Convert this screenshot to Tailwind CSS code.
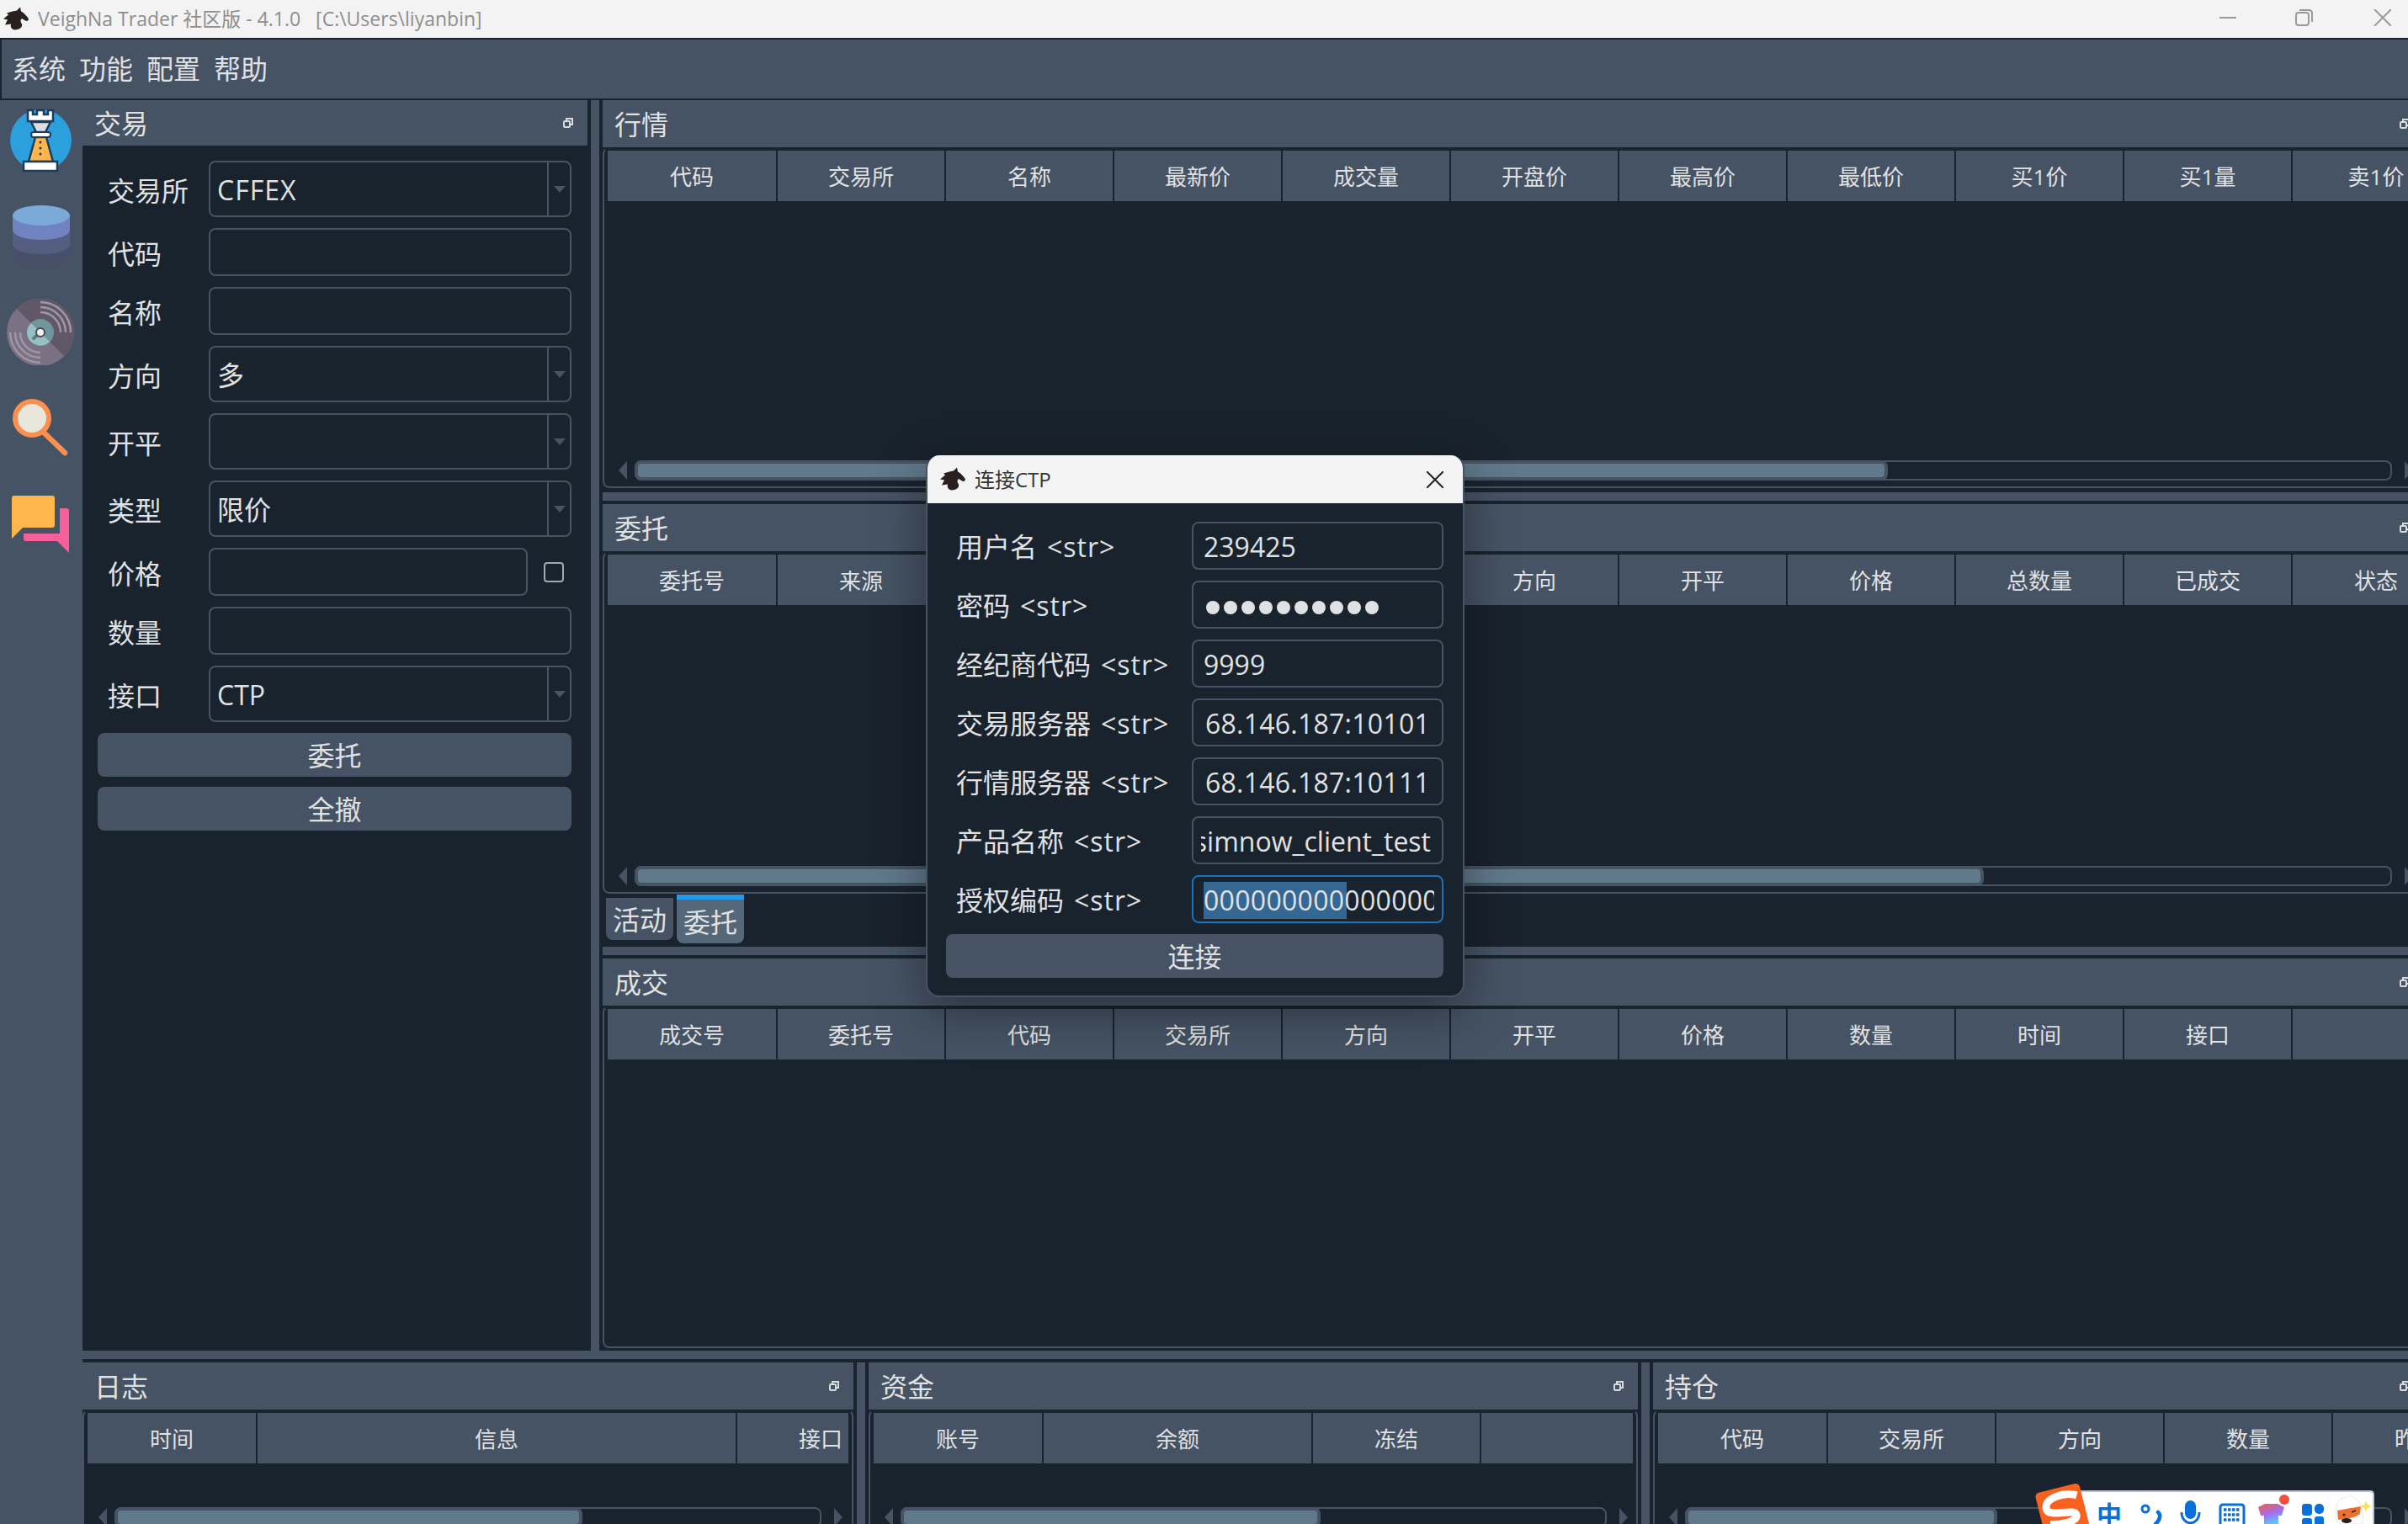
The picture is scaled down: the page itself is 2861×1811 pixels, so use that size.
<!DOCTYPE html>
<html lang="zh-CN">
<head>
    <meta charset="UTF-8">
    <title>VeighNa Trader</title>
    <script src="https://cdn.jsdelivr.net/npm/@tailwindcss/browser@4"></script>
</head>
<body class="bg-[#19232d]">
<div class="relative w-[2861px] h-[1811px] overflow-hidden flex flex-col bg-[#19232d] text-[#e0e1e3] text-[32px] [font-family:'Open_Sans','Noto_Sans_CJK_SC',sans-serif]">

    <!-- title bar -->
    <div class="h-[47px] shrink-0 bg-[#f3f3f3] border-b-2 border-[#19232d] flex items-center pl-[3px] relative">
        <svg class="w-[32px] h-[29px]" viewBox="0 0 32 28"><path fill="#2a1f1f" d="M12 5L17 4L21 0L22 5C26 7 29 11 31 14C31 16 29 17 27 16L23 13.5C21 15 21 18 23 20C24 24 20 27 14 27C11 26 9 24 10 20L3 21L6 15L1 14L7 9L5 7Z"/></svg>
        <span class="ml-[10px] text-[23px] leading-none text-[#8e8e8e] whitespace-pre">VeighNa Trader 社区版 - 4.1.0   [C:\Users\liyanbin]</span>
        <svg class="absolute left-[2637px] top-[11px] w-[204px] h-[20px]" viewBox="0 0 204 20" fill="none" stroke="#9a9a9a" stroke-width="2"><path d="M0 10H20"/><rect x="91" y="4" width="15" height="15" rx="3"/><path d="M95 1H106Q110 1 110 5V15"/><path d="M184 0L204 20M204 0L184 20"/></svg>
    </div>

    <!-- menu -->
    <div class="h-[72px] shrink-0 bg-[#455364] border-b-2 border-l-2 border-[#19232d] flex items-center pl-[12px] gap-[16px]">
        <span>系统</span><span>功能</span><span>配置</span><span>帮助</span>
    </div>

    <div class="flex flex-1 min-h-0">
        <!-- tool bar -->
        <div class="w-[98px] shrink-0 bg-[#455364] flex flex-col pt-[7px] gap-[34px]">
            <svg class="w-[98px] h-[80px]" viewBox="0 0 98 80">
                <circle cx="48.5" cy="40.5" r="36.5" fill="#2ba0dc"/>
                <path d="M42 37L34 66H63L55 37Z" fill="#ffb64d" stroke="#1c3c5c" stroke-width="2.5"/>
                <path d="M37 19H60L54 31H43Z" fill="#dcdfe2" stroke="#1c3c5c" stroke-width="2.5"/>
                <path d="M33 5H39V10H44V5H52V10H57V5H63V18H33Z" fill="#fff" stroke="#1c3c5c" stroke-width="2.5"/>
                <rect x="37" y="31" width="23" height="6" rx="3" fill="#fff" stroke="#1c3c5c" stroke-width="2"/>
                <rect x="28" y="66" width="40" height="11" fill="#fff" stroke="#1c3c5c" stroke-width="2.5"/>
                <circle cx="48" cy="43" r="1.5" fill="#1c3c5c"/><circle cx="48" cy="50" r="1.5" fill="#1c3c5c"/><circle cx="48" cy="57" r="1.5" fill="#1c3c5c"/>
            </svg>
            <svg class="w-[98px] h-[80px]" viewBox="0 0 98 80">
                <path d="M15 40V65C15 72 30 77 49 77S83 72 83 65V40Z" fill="#474f69"/>
                <path d="M15 30V50C15 57 30 62 49 62S83 57 83 50V30Z" fill="#545e80"/>
                <path d="M15 16V33C15 40 30 45 49 45S83 40 83 33V16Z" fill="#7082c0"/>
                <ellipse cx="49" cy="16" rx="34" ry="12" fill="#7baad9"/>
            </svg>
            <svg class="w-[98px] h-[80px]" viewBox="0 0 98 80">
                <circle cx="48" cy="41" r="40" fill="#7b7084"/>
                <path d="M48 41V1A40 40 0 0 0 20 13Z" fill="#625766"/>
                <path d="M48 41L76 69A40 40 0 0 0 88 41Z" fill="#625766"/>
                <path d="M48 41V1A40 40 0 0 1 88 41Z" fill="#625766"/>
                <g fill="none" stroke="#a096a6" stroke-width="2.5">
                    <path d="M48 5A36 36 0 0 1 84 41"/><path d="M48 11A30 30 0 0 1 78 41"/><path d="M48 17A24 24 0 0 1 72 41"/>
                    <path d="M12 41A36 36 0 0 0 48 77"/><path d="M18 41A30 30 0 0 0 48 71"/><path d="M24 41A24 24 0 0 0 48 65"/>
                </g>
                <circle cx="48" cy="41" r="16" fill="#6f969c"/>
                <path d="M48 41L37 30A16 16 0 0 0 32 41Z" fill="#96bfc6"/>
                <path d="M48 41L59 52A16 16 0 0 1 32 41Z" fill="#96bfc6"/>
                <path d="M48 41L40 48" stroke="#5d7c80" stroke-width="4" stroke-linecap="round"/>
                <circle cx="48" cy="41" r="5" fill="#f1eff3" stroke="#4c4552" stroke-width="2"/>
            </svg>
            <svg class="w-[98px] h-[80px]" viewBox="0 0 98 80">
                <path d="M52 46L77 70" stroke="#fa8f4e" stroke-width="6.5" stroke-linecap="round"/>
                <circle cx="38" cy="29" r="20" fill="#e9e6dc" stroke="#fa8f4e" stroke-width="6"/>
            </svg>
            <svg class="w-[98px] h-[80px]" viewBox="0 -1 98 80">
                <path d="M71 21H79Q82 21 82 24V74L68 60H31Q28 60 28 57V51H71Z" fill="#f4619a"/>
                <path d="M17 6H62Q65 6 65 9V41Q65 44 62 44H27L14 57V9Q14 6 17 6Z" fill="#ffb64d"/>
            </svg>
        </div>

        <div class="flex-1 min-w-0 flex flex-col">
            <div class="h-[1486px] shrink-0 flex">
                <!-- trading dock -->
                <div class="w-[600px] shrink-0 flex flex-col">
                    <div class="h-[54px] shrink-0 bg-[#455364] flex items-center justify-between pl-[14px] pr-[17px]">
                        <span class="pt-[2px]">交易</span>
                        <svg class="w-[12px] h-[12px]" viewBox="0 0 12 12" fill="none" stroke="#d8dadd" stroke-width="2"><rect x="1" y="4" width="7" height="7" rx="1"/><path d="M4 4V1H11V8H8"/></svg>
                    </div>
                    <div class="flex-1 flex flex-col pt-[18px] pl-[18px] pr-[19px]">
                        <div class="flex flex-col gap-[13px]">
                            <div class="h-[67px] flex items-center">
                                <span class="w-[132px] pl-[12px] pt-[5px]">交易所</span>
                                <div class="flex-1 h-full border-2 border-[#455364] rounded-lg flex items-center pl-[8px]">
                                    <span class="flex-1 pt-[2px] tracking-[1px]">CFFEX</span>
                                    <div class="w-[27px] h-full border-l-2 border-[#455364] flex items-center justify-center"><div class="border-x-[7px] border-x-transparent border-t-[8px] border-t-[#455364]"></div></div>
                                </div>
                            </div>
                            <div class="h-[57px] flex items-center">
                                <span class="w-[132px] pl-[12px] pt-[5px]">代码</span>
                                <div class="flex-1 h-full border-2 border-[#455364] rounded-lg"></div>
                            </div>
                            <div class="h-[57px] flex items-center">
                                <span class="w-[132px] pl-[12px] pt-[5px]">名称</span>
                                <div class="flex-1 h-full border-2 border-[#455364] rounded-lg"></div>
                            </div>
                            <div class="h-[67px] flex items-center">
                                <span class="w-[132px] pl-[12px] pt-[5px]">方向</span>
                                <div class="flex-1 h-full border-2 border-[#455364] rounded-lg flex items-center pl-[8px]">
                                    <span class="flex-1 pt-[2px]">多</span>
                                    <div class="w-[27px] h-full border-l-2 border-[#455364] flex items-center justify-center"><div class="border-x-[7px] border-x-transparent border-t-[8px] border-t-[#455364]"></div></div>
                                </div>
                            </div>
                            <div class="h-[67px] flex items-center">
                                <span class="w-[132px] pl-[12px] pt-[5px]">开平</span>
                                <div class="flex-1 h-full border-2 border-[#455364] rounded-lg flex items-center pl-[8px]">
                                    <span class="flex-1"></span>
                                    <div class="w-[27px] h-full border-l-2 border-[#455364] flex items-center justify-center"><div class="border-x-[7px] border-x-transparent border-t-[8px] border-t-[#455364]"></div></div>
                                </div>
                            </div>
                            <div class="h-[67px] flex items-center">
                                <span class="w-[132px] pl-[12px] pt-[5px]">类型</span>
                                <div class="flex-1 h-full border-2 border-[#455364] rounded-lg flex items-center pl-[8px]">
                                    <span class="flex-1 pt-[2px]">限价</span>
                                    <div class="w-[27px] h-full border-l-2 border-[#455364] flex items-center justify-center"><div class="border-x-[7px] border-x-transparent border-t-[8px] border-t-[#455364]"></div></div>
                                </div>
                            </div>
                            <div class="h-[57px] flex items-center">
                                <span class="w-[132px] pl-[12px] pt-[5px]">价格</span>
                                <div class="w-[379px] h-full border-2 border-[#455364] rounded-lg"></div>
                                <div class="ml-[19px] w-[24px] h-[24px] border-2 border-[#9da9b5] rounded-[4px]"></div>
                            </div>
                            <div class="h-[57px] flex items-center">
                                <span class="w-[132px] pl-[12px] pt-[5px]">数量</span>
                                <div class="flex-1 h-full border-2 border-[#455364] rounded-lg"></div>
                            </div>
                            <div class="h-[67px] flex items-center">
                                <span class="w-[132px] pl-[12px] pt-[5px]">接口</span>
                                <div class="flex-1 h-full border-2 border-[#455364] rounded-lg flex items-center pl-[8px]">
                                    <span class="flex-1 pt-[2px]">CTP</span>
                                    <div class="w-[27px] h-full border-l-2 border-[#455364] flex items-center justify-center"><div class="border-x-[7px] border-x-transparent border-t-[8px] border-t-[#455364]"></div></div>
                                </div>
                            </div>
                        </div>
                        <div class="mt-[13px] h-[52px] pt-[2px] bg-[#455364] rounded-lg flex items-center justify-center">委托</div>
                        <div class="mt-[12px] h-[52px] pt-[2px] bg-[#455364] rounded-lg flex items-center justify-center">全撤</div>
                    </div>
                </div>
                <div class="w-[4px] shrink-0"></div>
                <div class="w-[10px] shrink-0 bg-[#455364]"></div>
                <div class="w-[4px] shrink-0"></div>

                <!-- right column -->
                <div class="w-[2145px] shrink-0 overflow-hidden flex flex-col items-start">
                    <!-- market -->
                    <div class="w-[2164px] shrink-0 h-[461px] flex flex-col">
                        <div class="h-[56px] shrink-0 bg-[#455364] flex items-center justify-between pl-[14px] pr-[17px]">
                            <span class="pt-[2px]">行情</span>
                            <svg class="w-[12px] h-[12px]" viewBox="0 0 12 12" fill="none" stroke="#d8dadd" stroke-width="2"><rect x="1" y="4" width="7" height="7" rx="1"/><path d="M4 4V1H11V8H8"/></svg>
                        </div>
                        <div class="flex-1 min-h-0 flex flex-col border-2 border-[#455364] border-t-[#19232d] rounded-lg pt-[2px]">
                            <div class="ml-[4px] h-[60px] shrink-0 bg-[#455364] flex overflow-hidden text-[26px] [&>div]:pt-[2px]">
                                <div class="w-[202px] shrink-0 border-r-2 border-[#19232d] flex items-center justify-center">代码</div>
                                <div class="w-[200px] shrink-0 border-r-2 border-[#19232d] flex items-center justify-center">交易所</div>
                                <div class="w-[200px] shrink-0 border-r-2 border-[#19232d] flex items-center justify-center">名称</div>
                                <div class="w-[200px] shrink-0 border-r-2 border-[#19232d] flex items-center justify-center">最新价</div>
                                <div class="w-[200px] shrink-0 border-r-2 border-[#19232d] flex items-center justify-center">成交量</div>
                                <div class="w-[200px] shrink-0 border-r-2 border-[#19232d] flex items-center justify-center">开盘价</div>
                                <div class="w-[200px] shrink-0 border-r-2 border-[#19232d] flex items-center justify-center">最高价</div>
                                <div class="w-[200px] shrink-0 border-r-2 border-[#19232d] flex items-center justify-center">最低价</div>
                                <div class="w-[200px] shrink-0 border-r-2 border-[#19232d] flex items-center justify-center">买1价</div>
                                <div class="w-[200px] shrink-0 border-r-2 border-[#19232d] flex items-center justify-center">买1量</div>
                                <div class="w-[200px] shrink-0 border-r-2 border-[#19232d] flex items-center justify-center">卖1价</div>
                            </div>
                            <div class="flex-1"></div>
                            <div class="h-[24px] shrink-0 mb-[7px] flex items-center pl-[17px] pr-[11px]">
                                <div class="border-y-[11px] border-y-transparent border-r-[10px] border-r-[#455364]"></div>
                                <div class="ml-[9px] flex-1 h-full border-2 border-[#455364] rounded-lg"><div class="w-[1489px] h-[24px] -m-[2px] bg-[#60798b] border-4 border-[#455364] rounded-lg"></div></div>
                                <div class="ml-[15px] border-y-[11px] border-y-transparent border-l-[10px] border-l-[#455364]"></div>
                            </div>
                        </div>
                    </div>
                    <div class="h-[5px] shrink-0"></div>
                    <div class="w-[2164px] h-[10px] shrink-0 bg-[#455364]"></div>
                    <div class="h-[4px] shrink-0"></div>

                    <!-- orders -->
                    <div class="w-[2164px] shrink-0 h-[463px] flex flex-col">
                        <div class="h-[56px] shrink-0 bg-[#455364] flex items-center justify-between pl-[14px] pr-[17px]">
                            <span class="pt-[2px]">委托</span>
                            <svg class="w-[12px] h-[12px]" viewBox="0 0 12 12" fill="none" stroke="#d8dadd" stroke-width="2"><rect x="1" y="4" width="7" height="7" rx="1"/><path d="M4 4V1H11V8H8"/></svg>
                        </div>
                        <div class="flex-1 min-h-0 flex flex-col border-2 border-[#455364] border-t-[#19232d] rounded-lg pt-[2px]">
                            <div class="ml-[4px] h-[60px] shrink-0 bg-[#455364] flex overflow-hidden text-[26px] [&>div]:pt-[2px]">
                                <div class="w-[202px] shrink-0 border-r-2 border-[#19232d] flex items-center justify-center">委托号</div>
                                <div class="w-[200px] shrink-0 border-r-2 border-[#19232d] flex items-center justify-center">来源</div>
                                <div class="w-[200px] shrink-0 border-r-2 border-[#19232d] flex items-center justify-center">代码</div>
                                <div class="w-[200px] shrink-0 border-r-2 border-[#19232d] flex items-center justify-center">交易所</div>
                                <div class="w-[200px] shrink-0 border-r-2 border-[#19232d] flex items-center justify-center">类型</div>
                                <div class="w-[200px] shrink-0 border-r-2 border-[#19232d] flex items-center justify-center">方向</div>
                                <div class="w-[200px] shrink-0 border-r-2 border-[#19232d] flex items-center justify-center">开平</div>
                                <div class="w-[200px] shrink-0 border-r-2 border-[#19232d] flex items-center justify-center">价格</div>
                                <div class="w-[200px] shrink-0 border-r-2 border-[#19232d] flex items-center justify-center">总数量</div>
                                <div class="w-[200px] shrink-0 border-r-2 border-[#19232d] flex items-center justify-center">已成交</div>
                                <div class="w-[200px] shrink-0 border-r-2 border-[#19232d] flex items-center justify-center">状态</div>
                            </div>
                            <div class="flex-1"></div>
                            <div class="h-[24px] shrink-0 mb-[7px] flex items-center pl-[17px] pr-[11px]">
                                <div class="border-y-[11px] border-y-transparent border-r-[10px] border-r-[#455364]"></div>
                                <div class="ml-[9px] flex-1 h-full border-2 border-[#455364] rounded-lg"><div class="w-[1603px] h-[24px] -m-[2px] bg-[#60798b] border-4 border-[#455364] rounded-lg"></div></div>
                                <div class="ml-[15px] border-y-[11px] border-y-transparent border-l-[10px] border-l-[#455364]"></div>
                            </div>
                        </div>
                    </div>
                    <!-- tabs -->
                    <div class="h-[63px] shrink-0 flex items-start pl-[4px] gap-[4px]">
                        <div class="mt-[5px] w-[80px] h-[50px] pt-[2px] bg-[#455364] rounded-b-lg flex items-center justify-center">活动</div>
                        <div class="mt-[1px] w-[80px] h-[58px] pt-[2px] bg-[#54687a] border-t-[6px] border-[#2599ea] rounded-b-lg flex items-center justify-center">委托</div>
                    </div>
                    <div class="w-[2164px] h-[10px] shrink-0 bg-[#455364]"></div>
                    <div class="h-[4px] shrink-0"></div>

                    <!-- trades -->
                    <div class="w-[2164px] shrink-0 h-[463px] flex flex-col">
                        <div class="h-[56px] shrink-0 bg-[#455364] flex items-center justify-between pl-[14px] pr-[17px]">
                            <span class="pt-[2px]">成交</span>
                            <svg class="w-[12px] h-[12px]" viewBox="0 0 12 12" fill="none" stroke="#d8dadd" stroke-width="2"><rect x="1" y="4" width="7" height="7" rx="1"/><path d="M4 4V1H11V8H8"/></svg>
                        </div>
                        <div class="flex-1 min-h-0 flex flex-col border-2 border-[#455364] border-t-[#19232d] rounded-lg pt-[2px]">
                            <div class="ml-[4px] h-[60px] shrink-0 bg-[#455364] flex overflow-hidden text-[26px] [&>div]:pt-[2px]">
                                <div class="w-[202px] shrink-0 border-r-2 border-[#19232d] flex items-center justify-center">成交号</div>
                                <div class="w-[200px] shrink-0 border-r-2 border-[#19232d] flex items-center justify-center">委托号</div>
                                <div class="w-[200px] shrink-0 border-r-2 border-[#19232d] flex items-center justify-center">代码</div>
                                <div class="w-[200px] shrink-0 border-r-2 border-[#19232d] flex items-center justify-center">交易所</div>
                                <div class="w-[200px] shrink-0 border-r-2 border-[#19232d] flex items-center justify-center">方向</div>
                                <div class="w-[200px] shrink-0 border-r-2 border-[#19232d] flex items-center justify-center">开平</div>
                                <div class="w-[200px] shrink-0 border-r-2 border-[#19232d] flex items-center justify-center">价格</div>
                                <div class="w-[200px] shrink-0 border-r-2 border-[#19232d] flex items-center justify-center">数量</div>
                                <div class="w-[200px] shrink-0 border-r-2 border-[#19232d] flex items-center justify-center">时间</div>
                                <div class="w-[200px] shrink-0 border-r-2 border-[#19232d] flex items-center justify-center">接口</div>
                            </div>
                        </div>
                    </div>
                </div>
            </div>

            <div class="h-[10px] shrink-0 bg-[#455364]"></div>
            <div class="h-[4px] shrink-0"></div>

            <!-- bottom docks -->
            <div class="flex-1 min-h-0 flex overflow-hidden">
                <div class="w-[916px] shrink-0 flex flex-col">
                    <div class="h-[56px] shrink-0 bg-[#455364] flex items-center justify-between pl-[14px] pr-[17px]">
                        <span class="pt-[2px]">日志</span>
                        <svg class="w-[12px] h-[12px]" viewBox="0 0 12 12" fill="none" stroke="#d8dadd" stroke-width="2"><rect x="1" y="4" width="7" height="7" rx="1"/><path d="M4 4V1H11V8H8"/></svg>
                    </div>
                    <div class="h-[149px] shrink-0 flex flex-col border-2 border-[#455364] border-t-[#19232d] rounded-lg pt-[2px]">
                        <div class="mx-[4px] h-[60px] shrink-0 bg-[#455364] flex overflow-hidden text-[26px] [&>div]:pt-[2px]">
                            <div class="w-[202px] shrink-0 border-r-2 border-[#19232d] flex items-center justify-center">时间</div>
                            <div class="w-[570px] shrink-0 border-r-2 border-[#19232d] flex items-center justify-center">信息</div>
                            <div class="w-[200px] shrink-0 border-r-2 border-[#19232d] flex items-center justify-center">接口</div>
                        </div>
                        <div class="flex-1"></div>
                        <div class="h-[24px] shrink-0 mb-[7px] flex items-center pl-[17px] pr-[11px]">
                            <div class="border-y-[11px] border-y-transparent border-r-[10px] border-r-[#455364]"></div>
                            <div class="ml-[9px] flex-1 h-full border-2 border-[#455364] rounded-lg"><div class="w-[556px] h-[24px] -m-[2px] bg-[#60798b] border-4 border-[#455364] rounded-lg"></div></div>
                            <div class="ml-[15px] border-y-[11px] border-y-transparent border-l-[10px] border-l-[#455364]"></div>
                        </div>
                    </div>
                </div>
                <div class="w-[4px] shrink-0"></div>
                <div class="w-[10px] shrink-0 bg-[#455364]"></div>
                <div class="w-[4px] shrink-0"></div>
                <div class="w-[914px] shrink-0 flex flex-col">
                    <div class="h-[56px] shrink-0 bg-[#455364] flex items-center justify-between pl-[14px] pr-[17px]">
                        <span class="pt-[2px]">资金</span>
                        <svg class="w-[12px] h-[12px]" viewBox="0 0 12 12" fill="none" stroke="#d8dadd" stroke-width="2"><rect x="1" y="4" width="7" height="7" rx="1"/><path d="M4 4V1H11V8H8"/></svg>
                    </div>
                    <div class="h-[149px] shrink-0 flex flex-col border-2 border-[#455364] border-t-[#19232d] rounded-lg pt-[2px]">
                        <div class="mx-[4px] h-[60px] shrink-0 bg-[#455364] flex overflow-hidden text-[26px] [&>div]:pt-[2px]">
                            <div class="w-[202px] shrink-0 border-r-2 border-[#19232d] flex items-center justify-center">账号</div>
                            <div class="w-[320px] shrink-0 border-r-2 border-[#19232d] flex items-center justify-center">余额</div>
                            <div class="w-[200px] shrink-0 border-r-2 border-[#19232d] flex items-center justify-center">冻结</div>
                            <div class="flex-1"></div>
                        </div>
                        <div class="flex-1"></div>
                        <div class="h-[24px] shrink-0 mb-[7px] flex items-center pl-[17px] pr-[10px]">
                            <div class="border-y-[11px] border-y-transparent border-r-[10px] border-r-[#455364]"></div>
                            <div class="ml-[9px] flex-1 h-full border-2 border-[#455364] rounded-lg"><div class="w-[499px] h-[24px] -m-[2px] bg-[#60798b] border-4 border-[#455364] rounded-lg"></div></div>
                            <div class="ml-[15px] border-y-[11px] border-y-transparent border-l-[10px] border-l-[#455364]"></div>
                        </div>
                    </div>
                </div>
                <div class="w-[4px] shrink-0"></div>
                <div class="w-[10px] shrink-0 bg-[#455364]"></div>
                <div class="w-[4px] shrink-0"></div>
                <div class="w-[916px] shrink-0 flex flex-col">
                    <div class="h-[56px] shrink-0 bg-[#455364] flex items-center justify-between pl-[14px] pr-[17px]">
                        <span class="pt-[2px]">持仓</span>
                        <svg class="w-[12px] h-[12px]" viewBox="0 0 12 12" fill="none" stroke="#d8dadd" stroke-width="2"><rect x="1" y="4" width="7" height="7" rx="1"/><path d="M4 4V1H11V8H8"/></svg>
                    </div>
                    <div class="h-[149px] shrink-0 flex flex-col border-2 border-[#455364] border-t-[#19232d] rounded-lg pt-[2px]">
                        <div class="mx-[4px] h-[60px] shrink-0 bg-[#455364] flex overflow-hidden text-[26px] [&>div]:pt-[2px]">
                            <div class="w-[202px] shrink-0 border-r-2 border-[#19232d] flex items-center justify-center">代码</div>
                            <div class="w-[200px] shrink-0 border-r-2 border-[#19232d] flex items-center justify-center">交易所</div>
                            <div class="w-[200px] shrink-0 border-r-2 border-[#19232d] flex items-center justify-center">方向</div>
                            <div class="w-[200px] shrink-0 border-r-2 border-[#19232d] flex items-center justify-center">数量</div>
                            <div class="w-[200px] shrink-0 border-r-2 border-[#19232d] flex items-center justify-center">昨仓</div>
                        </div>
                        <div class="flex-1"></div>
                        <div class="h-[24px] shrink-0 mb-[7px] flex items-center pl-[17px] pr-[11px]">
                            <div class="border-y-[11px] border-y-transparent border-r-[10px] border-r-[#455364]"></div>
                            <div class="ml-[9px] flex-1 h-full border-2 border-[#455364] rounded-lg"><div class="w-[371px] h-[24px] -m-[2px] bg-[#60798b] border-4 border-[#455364] rounded-lg"></div></div>
                            <div class="ml-[15px] border-y-[11px] border-y-transparent border-l-[10px] border-l-[#455364]"></div>
                        </div>
                    </div>
                </div>
            </div>
        </div>
    </div>

    <!-- login dialog -->
    <div class="absolute left-[1100px] top-[541px] w-[640px] h-[644px] flex flex-col bg-[#19232d] border-2 border-t-0 border-[#455364] rounded-[16px] overflow-hidden shadow-[0_16px_60px_rgba(0,0,0,0.4)]">
        <div class="h-[57px] shrink-0 bg-[#f3f3f3] flex items-center pl-[14px] pr-[23px] text-[#333333]">
            <svg class="w-[32px] h-[29px]" viewBox="0 0 32 28"><path fill="#2a1f1f" d="M12 5L17 4L21 0L22 5C26 7 29 11 31 14C31 16 29 17 27 16L23 13.5C21 15 21 18 23 20C24 24 20 27 14 27C11 26 9 24 10 20L3 21L6 15L1 14L7 9L5 7Z"/></svg>
            <span class="ml-[10px] flex-1 text-[24px] leading-none">连接CTP</span>
            <svg class="w-[20px] h-[20px]" viewBox="0 0 20 20" fill="none" stroke="#222222" stroke-width="2"><path d="M0 0L20 20M20 0L0 20"/></svg>
        </div>
        <div class="flex-1 flex flex-col pt-[22px] pl-[20px] pr-[23px]">
            <div class="flex flex-col gap-[13px]">
                <div class="h-[57px] flex items-center">
                    <span class="w-[294px] shrink-0 pl-[14px] pt-[3px] whitespace-nowrap">用户名<span class="ml-[12px] tracking-[1px]">&lt;str&gt;</span></span>
                    <div class="w-[299px] shrink-0 h-full pt-[2px] border-2 border-[#455364] rounded-lg flex items-center pl-[12px]">239425</div>
                </div>
                <div class="h-[57px] flex items-center">
                    <span class="w-[294px] shrink-0 pl-[14px] pt-[3px] whitespace-nowrap">密码<span class="ml-[12px] tracking-[1px]">&lt;str&gt;</span></span>
                    <div class="w-[299px] shrink-0 h-full border-2 border-[#455364] rounded-lg flex items-center pl-[15px] pt-[6px] gap-[5px]">
                        <div class="w-[16px] h-[16px] rounded-full bg-[#e0e1e3]"></div><div class="w-[16px] h-[16px] rounded-full bg-[#e0e1e3]"></div><div class="w-[16px] h-[16px] rounded-full bg-[#e0e1e3]"></div><div class="w-[16px] h-[16px] rounded-full bg-[#e0e1e3]"></div><div class="w-[16px] h-[16px] rounded-full bg-[#e0e1e3]"></div><div class="w-[16px] h-[16px] rounded-full bg-[#e0e1e3]"></div><div class="w-[16px] h-[16px] rounded-full bg-[#e0e1e3]"></div><div class="w-[16px] h-[16px] rounded-full bg-[#e0e1e3]"></div><div class="w-[16px] h-[16px] rounded-full bg-[#e0e1e3]"></div><div class="w-[16px] h-[16px] rounded-full bg-[#e0e1e3]"></div>
                    </div>
                </div>
                <div class="h-[57px] flex items-center">
                    <span class="w-[294px] shrink-0 pl-[14px] pt-[3px] whitespace-nowrap">经纪商代码<span class="ml-[12px] tracking-[1px]">&lt;str&gt;</span></span>
                    <div class="w-[299px] shrink-0 h-full pt-[2px] border-2 border-[#455364] rounded-lg flex items-center pl-[12px]">9999</div>
                </div>
                <div class="h-[57px] flex items-center">
                    <span class="w-[294px] shrink-0 pl-[14px] pt-[3px] whitespace-nowrap">交易服务器<span class="ml-[12px] tracking-[1px]">&lt;str&gt;</span></span>
                    <div class="w-[299px] shrink-0 h-full pt-[2px] border-2 border-[#455364] rounded-lg flex items-center justify-end overflow-hidden pr-[14px] pl-[9px]"><div class="overflow-hidden flex justify-end whitespace-nowrap tracking-[0.25px]">168.146.187:10101</div></div>
                </div>
                <div class="h-[57px] flex items-center">
                    <span class="w-[294px] shrink-0 pl-[14px] pt-[3px] whitespace-nowrap">行情服务器<span class="ml-[12px] tracking-[1px]">&lt;str&gt;</span></span>
                    <div class="w-[299px] shrink-0 h-full pt-[2px] border-2 border-[#455364] rounded-lg flex items-center justify-end overflow-hidden pr-[14px] pl-[9px]"><div class="overflow-hidden flex justify-end whitespace-nowrap tracking-[0.25px]">168.146.187:10111</div></div>
                </div>
                <div class="h-[57px] flex items-center">
                    <span class="w-[294px] shrink-0 pl-[14px] pt-[3px] whitespace-nowrap">产品名称<span class="ml-[12px] tracking-[1px]">&lt;str&gt;</span></span>
                    <div class="w-[299px] shrink-0 h-full pt-[2px] border-2 border-[#455364] rounded-lg flex items-center justify-end overflow-hidden pr-[13px] pl-[9px]"><div class="overflow-hidden flex justify-end whitespace-nowrap">simnow_client_test</div></div>
                </div>
                <div class="h-[57px] flex items-center">
                    <span class="w-[294px] shrink-0 pl-[14px] pt-[3px] whitespace-nowrap">授权编码<span class="ml-[12px] tracking-[1px]">&lt;str&gt;</span></span>
                    <div class="relative w-[299px] shrink-0 h-full pt-[2px] border-2 border-[#1a72bb] rounded-lg flex items-center pl-[12px] pr-[9px]">
                        <div class="absolute left-[12px] top-[6px] w-[170px] h-[44px] bg-[#346792]"></div>
                        <div class="relative overflow-hidden whitespace-nowrap tracking-[0.3px]">00000000000000000000</div>
                    </div>
                </div>
            </div>
            <div class="mt-[13px] h-[52px] ml-[2px] pt-[2px] bg-[#455364] rounded-lg flex items-center justify-center">连接</div>
        </div>
    </div>

    <!-- input method toolbar -->
    <svg class="absolute left-[2410px] top-[1760px] w-[420px] h-[51px]" viewBox="2410 1760 420 51">
        <defs>
            <linearGradient id="shirt" x1="0" y1="0" x2="0.4" y2="1"><stop offset="0" stop-color="#f2603c"/><stop offset="0.55" stop-color="#a56bf0"/><stop offset="1" stop-color="#5cc8ff"/></linearGradient>
        </defs>
        <path d="M2470 1812V1776Q2470 1772 2474 1772H2816Q2820 1772 2820 1776V1812Z" fill="#ffffff" stroke="#b9c3d4" stroke-width="2"/>
        <g transform="rotate(-14 2448 1790)">
            <rect x="2422" y="1768" width="54" height="60" rx="5" fill="#f9611f"/>
            <path d="M2470 1782C2456 1774 2431 1776 2431 1789C2431 1801 2465 1795 2464 1805C2463 1812 2445 1812 2431 1808" fill="none" stroke="#ffffff" stroke-width="9"/>
        </g>
        <text x="2491" y="1811" font-family="'Noto Sans CJK SC',sans-serif" font-size="30" font-weight="700" fill="#0a6fd8">中</text>
        <circle cx="2549" cy="1793" r="4" fill="none" stroke="#0a6fd8" stroke-width="3"/>
        <path d="M2564 1797C2568 1800 2566 1807 2561 1811" fill="none" stroke="#0a6fd8" stroke-width="4.5" stroke-linecap="round"/>
        <rect x="2596" y="1783" width="13" height="22" rx="6.5" fill="#0a6fd8"/>
        <path d="M2592 1797C2592 1814 2613 1814 2613 1797" fill="none" stroke="#0a6fd8" stroke-width="3"/>
        <rect x="2638" y="1788" width="28" height="26" rx="3" fill="#ffffff" stroke="#0a6fd8" stroke-width="3"/>
        <path d="M2642 1794H2662M2642 1800H2662M2642 1806H2662" stroke="#0a6fd8" stroke-width="3.5" stroke-dasharray="3.5 1.5"/>
        <path d="M2691 1787H2706L2714 1791L2711 1801H2707V1812H2690V1801H2686L2683 1791Z" fill="url(#shirt)"/>
        <circle cx="2714" cy="1782" r="6" fill="#f2503a"/>
        <rect x="2735" y="1787" width="12" height="14" rx="3.5" fill="#0a6fd8"/>
        <rect x="2750" y="1787" width="11" height="12" rx="5" fill="#0a6fd8"/>
        <rect x="2735" y="1804" width="12" height="10" rx="3" fill="#0a6fd8"/>
        <rect x="2750" y="1802" width="11" height="12" rx="3" fill="#0a6fd8"/>
        <path d="M2775 1800C2775 1786 2780 1779 2786 1780L2792 1777L2800 1782C2806 1786 2808 1794 2807 1811H2780C2776 1808 2775 1804 2775 1800Z" fill="#ffffff" stroke="#eee5e5" stroke-width="1"/>
        <path d="M2777 1795L2805 1790L2804 1799C2796 1805 2786 1805 2778 1806Z" fill="#ef6f2e"/>
        <ellipse cx="2788" cy="1807" rx="6" ry="3" fill="#222222"/>
        <circle cx="2785" cy="1800" r="1.5" fill="#222222"/>
        <path d="M2794 1797L2799 1795" stroke="#222222" stroke-width="1.5"/>
        <path d="M2811 1783L2813 1788L2818 1790L2813 1792L2811 1797L2809 1792L2804 1790L2809 1788Z" fill="#f8e15c"/>
    </svg>
</div>
</body>
</html>
